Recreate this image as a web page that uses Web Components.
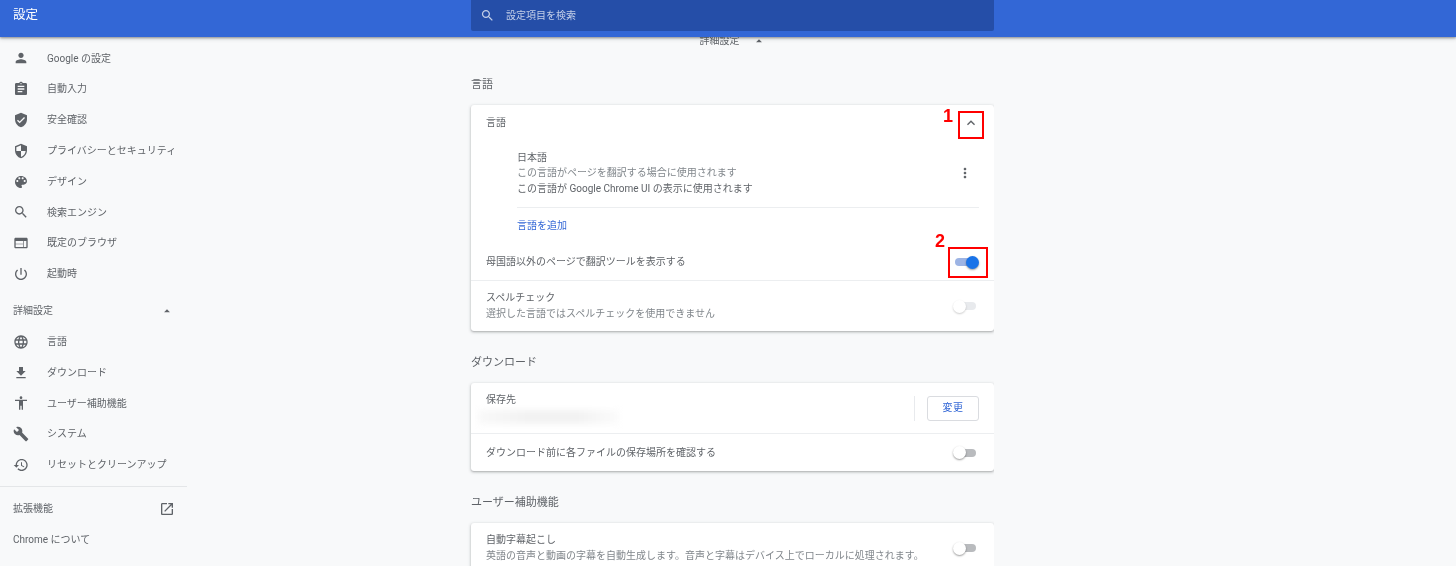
<!DOCTYPE html>
<html lang="ja">
<head>
<meta charset="utf-8">
<title>設定</title>
<style>
  html, body { margin: 0; height: 100%; overflow: hidden; background: #f8f9fa; }
  body { font: 10px/15.4px Roboto, "Noto Sans CJK JP", sans-serif; color: #5f6368; }
</style>
</head>
<body>
<settings-app>
  <settings-toolbar slot="toolbar" placeholder="設定項目を検索">設定</settings-toolbar>

  <settings-nav slot="nav">
    <nav-item icon="person">Google の設定</nav-item>
    <nav-item icon="assignment">自動入力</nav-item>
    <nav-item icon="verified">安全確認</nav-item>
    <nav-item icon="security">プライバシーとセキュリティ</nav-item>
    <nav-item icon="palette">デザイン</nav-item>
    <nav-item icon="search">検索エンジン</nav-item>
    <nav-item icon="web">既定のブラウザ</nav-item>
    <nav-item icon="power">起動時</nav-item>
    <nav-head expanded>詳細設定</nav-head>
    <nav-item icon="language">言語</nav-item>
    <nav-item icon="download">ダウンロード</nav-item>
    <nav-item icon="accessibility">ユーザー補助機能</nav-item>
    <nav-item icon="build">システム</nav-item>
    <nav-item icon="restore">リセットとクリーンアップ</nav-item>
    <nav-rule></nav-rule>
    <nav-head external>拡張機能</nav-head>
    <nav-head>Chrome について</nav-head>
  </settings-nav>

  <advanced-toggle slot="main">詳細設定</advanced-toggle>

  <settings-section slot="main" title="言語" first>
    <settings-row height="36">言語<chevron-button slot="end"></chevron-button></settings-row>
    <language-entry name="日本語" line1="この言語がページを翻訳する場合に使用されます" line2="この言語が Google Chrome UI の表示に使用されます"></language-entry>
    <add-language>言語を追加</add-language>
    <settings-row height="36">母国語以外のページで翻訳ツールを表示する<cr-toggle slot="end" checked></cr-toggle></settings-row>
    <settings-row height="51" divider sub="選択した言語ではスペルチェックを使用できません">スペルチェック<cr-toggle slot="end" disabled></cr-toggle></settings-row>
  </settings-section>

  <settings-section slot="main" title="ダウンロード">
    <settings-row height="50" sub=" " blurred>保存先<change-button slot="end">変更</change-button></settings-row>
    <settings-row height="38" divider>ダウンロード前に各ファイルの保存場所を確認する<cr-toggle slot="end"></cr-toggle></settings-row>
  </settings-section>

  <settings-section slot="main" title="ユーザー補助機能">
    <settings-row height="50" sub="英語の音声と動画の字幕を自動生成します。音声と字幕はデバイス上でローカルに処理されます。">自動字幕起こし<cr-toggle slot="end"></cr-toggle></settings-row>
  </settings-section>

  <red-mark slot="marks" label="1" x="958" y="111" w="26" h="28" lx="943" ly="106.5"></red-mark>
  <red-mark slot="marks" label="2" x="948" y="247" w="40" h="31" lx="935" ly="231.5"></red-mark>
</settings-app>

<script>
const ICONS = {
  person: 'M12 12c2.21 0 4-1.79 4-4s-1.79-4-4-4-4 1.79-4 4 1.79 4 4 4zm0 2c-2.67 0-8 1.34-8 4v2h16v-2c0-2.66-5.33-4-8-4z',
  assignment: 'M19 3h-4.18C14.4 1.84 13.3 1 12 1c-1.3 0-2.4.84-2.82 2H5c-1.1 0-2 .9-2 2v14c0 1.1.9 2 2 2h14c1.1 0 2-.9 2-2V5c0-1.1-.9-2-2-2zm-7 0c.55 0 1 .45 1 1s-.45 1-1 1-1-.45-1-1 .45-1 1-1zm2 14H7v-2h7v2zm3-4H7v-2h10v2zm0-4H7V7h10v2z',
  verified: 'M12 1L3 5v6c0 5.55 3.84 10.74 9 12 5.16-1.26 9-6.45 9-12V5l-9-4zm-2 16l-4-4 1.41-1.41L10 14.17l6.59-6.59L18 9l-8 8z',
  security: 'M12 1L3 5v6c0 5.55 3.84 10.74 9 12 5.16-1.26 9-6.45 9-12V5l-9-4zm0 10.99h7c-.53 4.12-3.28 7.79-7 8.94V12H5V6.3l7-3.11v8.8z',
  palette: 'M12 3c-4.97 0-9 4.03-9 9s4.03 9 9 9c.83 0 1.5-.67 1.5-1.5 0-.39-.15-.74-.39-1.01-.23-.26-.38-.61-.38-.99 0-.83.67-1.5 1.5-1.5H16c2.76 0 5-2.24 5-5 0-4.42-4.03-8-9-8zm-5.5 9c-.83 0-1.5-.67-1.5-1.5S5.67 9 6.5 9 8 9.67 8 10.5 7.33 12 6.5 12zm3-4C8.67 8 8 7.33 8 6.5S8.67 5 9.5 5s1.5.67 1.5 1.5S10.33 8 9.5 8zm5 0c-.83 0-1.5-.67-1.5-1.5S13.67 5 14.5 5s1.5.67 1.5 1.5S15.33 8 14.5 8zm3 4c-.83 0-1.5-.67-1.5-1.5S16.67 9 17.5 9s1.5.67 1.5 1.5-.67 1.5-1.5 1.5z',
  search: 'M15.5 14h-.79l-.28-.27C15.41 12.59 16 11.11 16 9.5 16 5.91 13.09 3 9.5 3S3 5.91 3 9.5 5.91 16 9.5 16c1.61 0 3.09-.59 4.23-1.57l.27.28v.79l5 4.99L20.49 19l-4.99-5zm-6 0C7.01 14 5 11.99 5 9.5S7.01 5 9.5 5 14 7.01 14 9.5 11.99 14 9.5 14z',
  web: 'M20 4H4c-1.1 0-1.99.9-1.99 2L2 18c0 1.1.9 2 2 2h16c1.1 0 2-.9 2-2V6c0-1.1-.9-2-2-2zm-5 14H4v-4h11v4zm0-5H4V9h11v4zm5 5h-4V9h4v9z',
  power: 'M13 3h-2v10h2V3zm4.83 2.17l-1.42 1.42C17.99 7.86 19 9.81 19 12c0 3.87-3.13 7-7 7s-7-3.13-7-7c0-2.19 1.01-4.14 2.58-5.42L6.17 5.17C4.23 6.82 3 9.26 3 12c0 4.97 4.03 9 9 9s9-4.03 9-9c0-2.74-1.23-5.18-3.17-6.83z',
  language: 'M11.99 2C6.47 2 2 6.48 2 12s4.47 10 9.99 10C17.52 22 22 17.52 22 12S17.52 2 11.99 2zm6.93 6h-2.95c-.32-1.25-.78-2.45-1.38-3.56 1.84.63 3.37 1.91 4.33 3.56zM12 4.04c.83 1.2 1.48 2.53 1.91 3.96h-3.82c.43-1.43 1.08-2.76 1.91-3.96zM4.26 14C4.1 13.36 4 12.69 4 12s.1-1.36.26-2h3.38c-.08.66-.14 1.32-.14 2 0 .68.06 1.34.14 2H4.26zm.82 2h2.95c.32 1.25.78 2.45 1.38 3.56-1.84-.63-3.37-1.9-4.33-3.56zm2.95-8H5.08c.96-1.66 2.49-2.93 4.33-3.56C8.81 5.55 8.35 6.75 8.03 8zM12 19.96c-.83-1.2-1.48-2.53-1.91-3.96h3.82c-.43 1.43-1.08 2.76-1.91 3.96zM14.34 14H9.66c-.09-.66-.16-1.32-.16-2 0-.68.07-1.35.16-2h4.68c.09.65.16 1.32.16 2 0 .68-.07 1.34-.16 2zm.25 5.56c.6-1.11 1.06-2.31 1.38-3.56h2.95c-.96 1.65-2.49 2.93-4.33 3.56zM16.36 14c.08-.66.14-1.32.14-2 0-.68-.06-1.34-.14-2h3.38c.16.64.26 1.31.26 2s-.1 1.36-.26 2h-3.38z',
  download: 'M19 9h-4V3H9v6H5l7 7 7-7zM5 18v2h14v-2H5z',
  accessibility: 'M12 2c1.1 0 2 .9 2 2s-.9 2-2 2-2-.9-2-2 .9-2 2-2zm9 7h-6v13h-2v-6h-2v6H9V9H3V7h18v2z',
  build: 'M22.7 19l-9.1-9.1c.9-2.3.4-5-1.5-6.9-2-2-5-2.4-7.4-1.3L9 6 6 9 1.6 4.7C.4 7.1.9 10.1 2.9 12.1c1.9 1.9 4.6 2.4 6.9 1.5l9.1 9.1c.4.4 1 .4 1.4 0l2.3-2.3c.5-.4.5-1.1.1-1.4z',
  restore: 'M13 3c-4.97 0-9 4.03-9 9H1l3.89 3.89.07.14L9 12H6c0-3.87 3.13-7 7-7s7 3.13 7 7-3.13 7-7 7c-1.93 0-3.68-.79-4.94-2.06l-1.42 1.42C8.27 19.99 10.51 21 13 21c4.97 0 9-4.03 9-9s-4.03-9-9-9zm-1 5v5l4.28 2.54.72-1.21-3.5-2.08V8H12z',
  launch: 'M19 19H5V5h7V3H5c-1.11 0-2 .9-2 2v14c0 1.1.89 2 2 2h14c1.1 0 2-.9 2-2v-7h-2v7zM14 3v2h3.59l-9.83 9.83 1.41 1.41L19 6.41V10h2V3h-7z',
  more: 'M12 8c1.1 0 2-.9 2-2s-.9-2-2-2-2 .9-2 2 .9 2 2 2zm0 2c-1.1 0-2 .9-2 2s.9 2 2 2 2-.9 2-2-.9-2-2-2zm0 6c-1.1 0-2 .9-2 2s.9 2 2 2 2-.9 2-2-.9-2-2-2z',
  chevron: 'M12 8l-6 6 1.41 1.41L12 10.83l4.59 4.58L18 14z',
  up: 'M7 14l5-5 5 5z'
}

const svg = (name, size, fill) =>
  `<svg width="${size}" height="${size}" viewBox="0 0 24 24" fill="${fill}"><path d="${ICONS[name]}"/></svg>`

// small helper so every element below is just styles + markup
function shadow(el, html) {
  el.attachShadow({ mode: 'open' }).innerHTML = html
}

class SettingsApp extends HTMLElement {
  constructor() {
    super()
    // the reference is a downscaled capture, so everything is a little soft
    shadow(this, `
      <style>
        :host { display: grid; grid-template-columns: 188px 1fr; grid-template-rows: 37px 1fr; height: 566px; overflow: hidden; position: relative; filter: blur(.35px); }
        .top { grid-column: 1 / 3; position: relative; z-index: 2; }
        .nav { overflow: hidden; }
        .main { overflow: hidden; padding-left: 283px; width: 523px; }
      </style>
      <div class="top"><slot name="toolbar"></slot></div>
      <div class="nav"><slot name="nav"></slot></div>
      <div class="main"><slot name="main"></slot></div>
      <slot name="marks"></slot>`)
  }
}
customElements.define('settings-app', SettingsApp)

class SettingsToolbar extends HTMLElement {
  constructor() {
    super()
    shadow(this, `
      <style>
        :host { display: grid; grid-template-columns: 471px 523px; height: 37px; background: #3367d6; box-shadow: 0 1px 2px rgba(60,64,67,.45), 0 2px 4px rgba(60,64,67,.2); }
        .title { padding: 6px 0 0 13px; font-size: 12.5px; line-height: 18px; color: #fff; }
        .search { display: flex; align-items: center; height: 31px; background: #254ea8; border-radius: 0 0 2px 2px; color: #c3cfe8; }
        svg { margin: 0 11px 0 9px; }
      </style>
      <div class="title"><slot></slot></div>
      <div class="search">${svg('search', 15, '#c3cfe8')}<span>${this.getAttribute('placeholder')}</span></div>`)
  }
}
customElements.define('settings-toolbar', SettingsToolbar)

class SettingsNav extends HTMLElement {
  constructor() {
    super()
    shadow(this, `
      <style>:host { display: block; padding-top: 6px; color: #5f6368; }</style>
      <slot></slot>`)
  }
}
customElements.define('settings-nav', SettingsNav)

class NavItem extends HTMLElement {
  constructor() {
    super()
    shadow(this, `
      <style>
        :host { display: flex; align-items: center; height: 30.8px; padding-left: 13px; white-space: nowrap; }
        svg { flex: none; margin-right: 18px; }
      </style>
      ${svg(this.getAttribute('icon'), 16, '#5f6368')}<slot></slot>`)
  }
}
customElements.define('nav-item', NavItem)

class NavHead extends HTMLElement {
  constructor() {
    super()
    const end = this.hasAttribute('expanded') ? svg('up', 14, '#5f6368')
      : this.hasAttribute('external') ? svg('launch', 16, '#5f6368') : ''
    shadow(this, `
      <style>
        :host { display: flex; align-items: center; justify-content: space-between; height: 30.8px; width: 162px; padding-left: 13px; }
        :host([expanded]) { box-sizing: content-box; height: 31px; padding-top: 6px; width: 161px; }
        svg { display: block; }
      </style>
      <span><slot></slot></span>${end}`)
  }
}
customElements.define('nav-head', NavHead)

class NavRule extends HTMLElement {
  constructor() {
    super()
    shadow(this, `<style>:host { display: block; height: 1px; margin: 6px 1px 6px 0; background: #e4e6e8; }</style>`)
  }
}
customElements.define('nav-rule', NavRule)

class AdvancedToggle extends HTMLElement {
  constructor() {
    super()
    shadow(this, `
      <style>
        :host { display: flex; align-items: center; gap: 12px; justify-content: center; height: 6px; padding-top: 1px; color: #5f6368; white-space: nowrap; }
        svg { display: block; }
      </style>
      <span><slot></slot></span>${svg('up', 14, '#5f6368')}`)
  }
}
customElements.define('advanced-toggle', AdvancedToggle)

class SettingsSection extends HTMLElement {
  constructor() {
    super()
    shadow(this, `
      <style>
        :host { display: block; }
        h2 { margin: 0; padding: 23.5px 0 0; height: 28.5px; font: inherit; font-size: 11px; line-height: 15px; color: #5f6368; }
        :host([first]) h2 { padding-top: 32.5px; }
        .card { background: #fff; border-radius: 3px; box-shadow: 0 1px 2px rgba(60,64,67,.3), 0 1px 3px 1px rgba(60,64,67,.12); }
      </style>
      <h2>${this.getAttribute('title')}</h2>
      <div class="card"><slot></slot></div>`)
  }
}
customElements.define('settings-section', SettingsSection)

class SettingsRow extends HTMLElement {
  constructor() {
    super()
    const sub = this.getAttribute('sub')
    const blurred = this.hasAttribute('blurred')
    shadow(this, `
      <style>
        :host { display: flex; align-items: center; box-sizing: border-box; height: ${this.getAttribute('height')}px; padding: 0 15px; white-space: nowrap; }
        :host([divider]) { border-top: 1px solid #eceef0; }
        :host([blurred]) .text { align-self: flex-start; padding-top: 9px; }
        .text { flex: 1; min-width: 0; }
        .sub { color: #80868b; margin-top: .5px; }
        .smudge { height: 14px; width: 142px; margin: 3px 0 0 -8px; background: linear-gradient(90deg, #f9f9f9, #f2f2f2 35%, #f2f2f2 70%, #fcfcfc); filter: blur(3px); }
      </style>
      <div class="text"><slot></slot>
        ${blurred ? '<div class="smudge"></div>' : sub ? `<div class="sub">${sub}</div>` : ''}
      </div>
      <slot name="end"></slot>`)
  }
}
customElements.define('settings-row', SettingsRow)

class LanguageEntry extends HTMLElement {
  constructor() {
    super()
    shadow(this, `
      <style>
        :host { display: flex; align-items: center; justify-content: space-between; height: 67px; margin: 0 15px 0 46px; border-bottom: 1px solid #eceef0; box-sizing: border-box; padding-bottom: 2px; }
        .sub { color: #80868b; }
        svg { margin-right: 6px; display: block; }
      </style>
      <div>
        <div>${this.getAttribute('name')}</div>
        <div class="sub">${this.getAttribute('line1')}</div>
        <div>${this.getAttribute('line2')}</div>
      </div>
      ${svg('more', 16, '#5f6368')}`)
  }
}
customElements.define('language-entry', LanguageEntry)

class AddLanguage extends HTMLElement {
  constructor() {
    super()
    shadow(this, `
      <style>:host { display: flex; align-items: center; height: 36px; padding-left: 46px; color: #3367d6; }</style>
      <slot></slot>`)
  }
}
customElements.define('add-language', AddLanguage)

class ChevronButton extends HTMLElement {
  constructor() {
    super()
    shadow(this, `
      <style>:host { display: block; } svg { display: block; }</style>
      ${svg('chevron', 16, '#5f6368')}`)
  }
}
customElements.define('chevron-button', ChevronButton)

class ChangeButton extends HTMLElement {
  constructor() {
    super()
    shadow(this, `
      <style>
        :host { display: block; padding-left: 12px; border-left: 1px solid #e8eaed; }
        div { display: flex; align-items: center; justify-content: center; width: 50px; height: 23px; border: 1px solid #dadce0; border-radius: 3px; color: #3367d6; letter-spacing: .5px; }
      </style>
      <div><slot></slot></div>`)
  }
}
customElements.define('change-button', ChangeButton)

class CrToggle extends HTMLElement {
  constructor() {
    super()
    shadow(this, `
      <style>
        :host { display: block; position: relative; width: 26.5px; height: 13px; }
        .track { position: absolute; left: 2.5px; top: 2.5px; width: 21px; height: 8px; border-radius: 4px; background: #b9bbbe; }
        .knob { position: absolute; left: 0; top: 0; width: 13px; height: 13px; border-radius: 50%; background: #fff; box-shadow: 0 1px 2px rgba(0,0,0,.4); }
        :host([checked]) .track { background: #9db4e4; }
        :host([checked]) .knob { left: 13.5px; background: #1a73e8; }
        :host([disabled]) .track { background: #e8eaed; }
        :host([disabled]) .knob { box-shadow: 0 1px 2px rgba(0,0,0,.2); }
      </style>
      <div class="track"></div><div class="knob"></div>`)
  }
}
customElements.define('cr-toggle', CrToggle)

// the numbered red boxes drawn over the screenshot
class RedMark extends HTMLElement {
  constructor() {
    super()
    const a = (n) => this.getAttribute(n)
    shadow(this, `
      <style>
        :host { display: contents; }
        .box { position: absolute; box-sizing: border-box; border: 2px solid #f00; left: ${a('x')}px; top: ${a('y')}px; width: ${a('w')}px; height: ${a('h')}px; z-index: 3; }
        .num { position: absolute; left: ${a('lx')}px; top: ${a('ly')}px; font: bold 18px/18px "Liberation Sans", sans-serif; color: #f00; z-index: 3; }
      </style>
      <div class="box"></div><div class="num">${a('label')}</div>`)
  }
}
customElements.define('red-mark', RedMark)
</script>
</body>
</html>
